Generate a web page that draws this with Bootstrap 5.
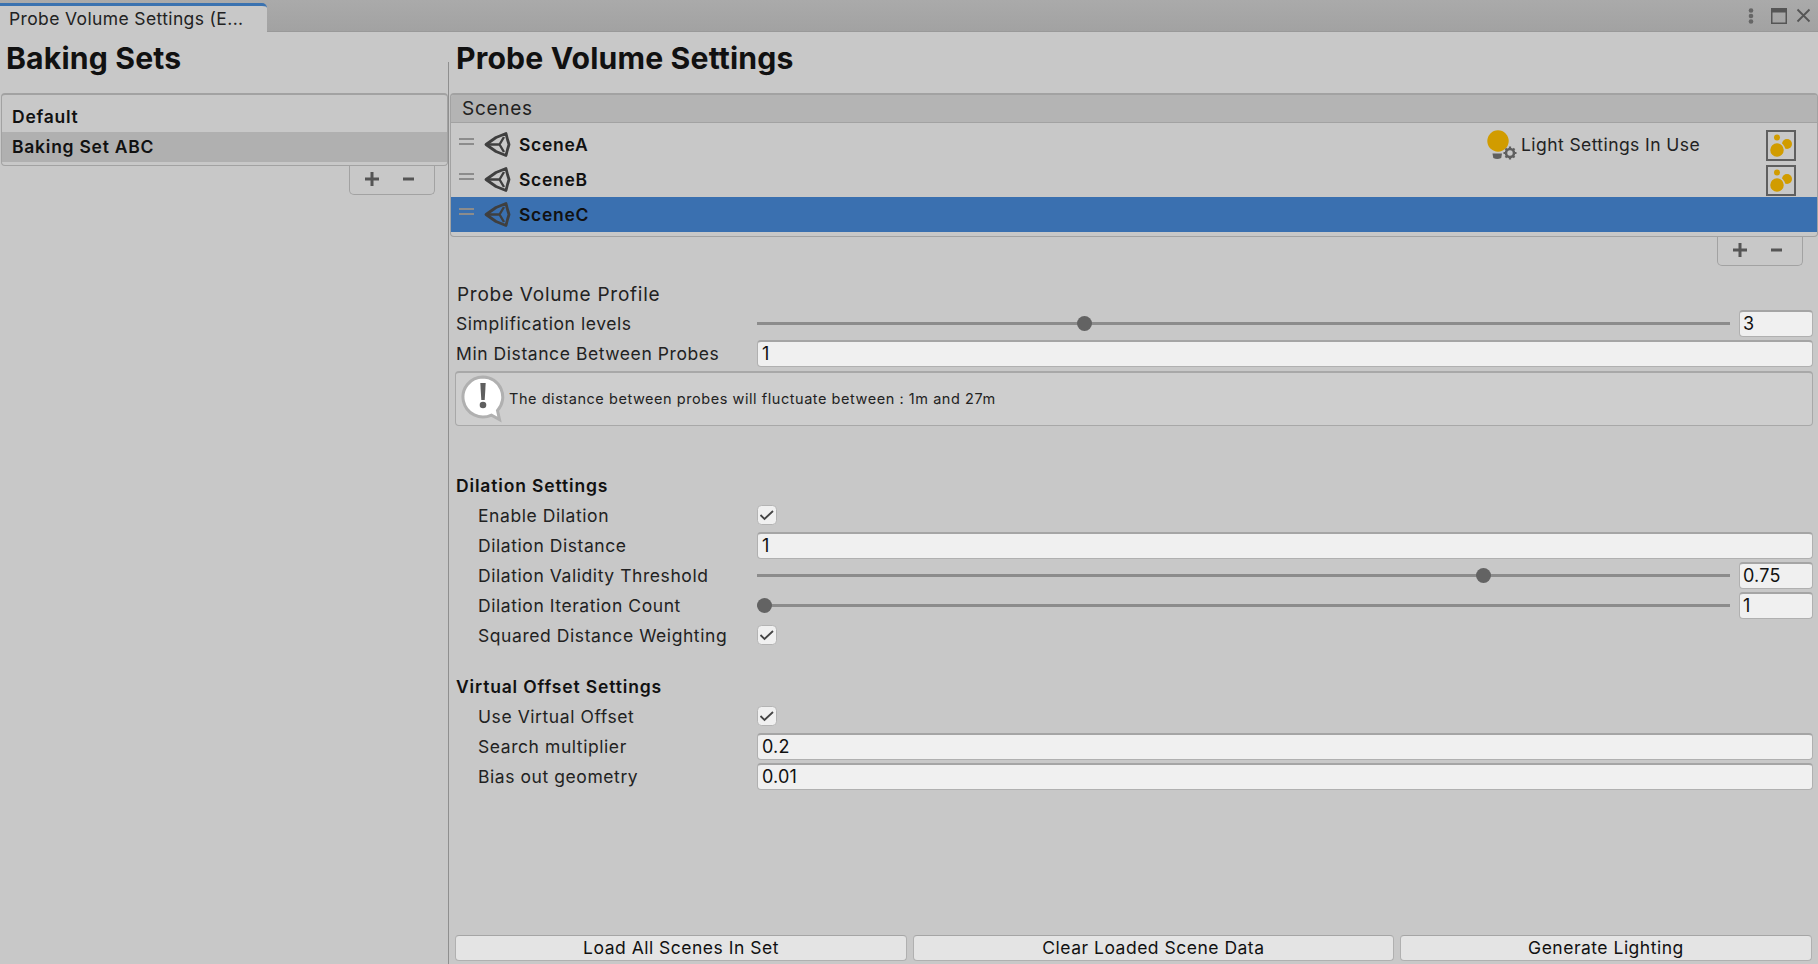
<!DOCTYPE html>
<html lang="en">
<head>
    <meta charset="UTF-8">
    <meta name="viewport" content="width=device-width, initial-scale=1.0">
    <title>Probe Volume Settings</title>
    <link href="https://cdn.jsdelivr.net/npm/bootstrap@5.3.2/dist/css/bootstrap.min.css" rel="stylesheet">
    <style>
        body {
            background: #c8c8c8;
            color: #111;
            font-family: Inter, "Liberation Sans", sans-serif;
            font-size: 17.5px;
            letter-spacing: .5px;
            height: 964px;
            overflow: hidden;
        }
        .tab-strip {
            height: 32px;
            background: linear-gradient(#aaa, #a2a2a2);
            border-bottom: 1px solid #999;
            flex: none;
        }
        .tab-active {
            width: 267px;
            margin-top: 3px;
            height: 29px;
            background: #c8c8c8;
            border-top: 3px solid #3a72b0;
            border-top-right-radius: 5px;
            padding-left: 9px;
            line-height: 26px;
            letter-spacing: .37px;
            color: #222;
        }
        .win-btns { padding-right: 7px; gap: 9px; }
        .main-area { position: relative; }
        .left-pane { width: 448px; flex: none; }
        .right-pane { min-width: 0; padding-bottom: 3px; }
        .pane-split {
            position: absolute;
            left: 448px;
            top: 30px;
            bottom: 0;
            width: 1px;
            background: #8f8f8f;
        }
        .pane-title {
            height: 61px;
            margin: 0;
            font-family: Inter, sans-serif;
            font-size: 30.2px;
            font-weight: 700;
            line-height: 53px;
            letter-spacing: .15px;
        }
        .left-pane .pane-title { padding-left: 6px; }
        .right-pane .pane-title { padding-left: 8px; }
        .list-box {
            border: 1px solid #a2a2a2;
            border-top: 2px solid #a2a2a2;
            border-radius: 4px;
            overflow: hidden;
            background: #c8c8c8;
        }
        .sets-box { margin-left: 1px; height: 73px; padding-top: 7px; }
        .set-row {
            height: 30px;
            line-height: 30px;
            padding: 0 10px;
            font-weight: 600;
            background: transparent;
            border: 0;
            color: #111;
            border-radius: 0 !important;
            font-size: 17.5px;
            letter-spacing: .75px;
        }
        .set-row.picked { background: #b0b0b0; }
        .add-rem {
            width: 86px;
            height: 29px;
            border: 1px solid #a2a2a2;
            border-top: 0;
            border-radius: 0 0 5px 5px;
            gap: 22px;
            padding-left: 14px;
            padding-bottom: 2px;
        }
        .add-rem svg { display: block; }
        .sets-foot { margin-left: 349px; }
        .scenes-foot { margin-left: 1269px; }
        .scenes-box { margin-left: 2px; height: 144px; }
        .scenes-head {
            height: 28px;
            background: #b4b4b4;
            border-bottom: 1px solid #a2a2a2;
            padding-left: 11px;
            line-height: 28px;
            font-size: 19px;
            letter-spacing: .74px;
            color: #222;
            margin-bottom: 4px;
        }
        .scene-row {
            height: 35px;
            padding-left: 8px;
            font-weight: 600;
            letter-spacing: .7px;
        }
        .scene-row.picked { background: #3a70b0; }
        .drag-grip {
            width: 15px;
            height: 3px;
            border-top: 2px solid #8c8c8c;
            border-bottom: 2px solid #8c8c8c;
            margin-right: 10px;
            margin-top: -6px;
            box-sizing: content-box;
        }
        .scene-name { margin-left: 8px; margin-top: 2px; }
        .light-note {
            margin-left: auto;
            font-weight: 400;
            letter-spacing: .42px;
            color: #222;
            width: 275px;
        }
        .light-note span { margin-left: 3px; flex: 1; margin-top: 2px; }
        .light-slot { width: 30px; margin: 1px 21px 0 5px; flex: none; }
        .form-wrap { padding: 0 5px 0 8px; margin-top: 12px; }
        .prop-row { height: 30px; }
        .prop-label { width: 301px; flex: none; color: #222; white-space: nowrap; margin-top: 2px; letter-spacing: .57px; }
        .prop-row.sub .prop-label { padding-left: 22px; }
        .group-head { height: 30px; line-height: 32px; font-weight: 600; color: #111; letter-spacing: .85px; }
        .profile-head { height: 30px; line-height: 34px; color: #222; padding-left: 1px; font-size: 19px; letter-spacing: .74px; }
        .num-field {
            height: 27px;
            padding: 0 4px;
            background: #f0f0f0;
            border: 1px solid #b0b0b0;
            border-top: 2px solid #a5a5a5;
            border-radius: 4px;
            font-size: 18px;
            line-height: 24px;
            color: #111;
            letter-spacing: .2px;
            box-shadow: none;
        }
        .num-field.short { width: 74px; flex: none; padding-left: 3px; }
        .slide-wrap { height: 27px; margin-right: 9px; position: relative; }
        .slide-line { position: absolute; left: 0; right: 0; top: 12px; height: 3px; background: #8c8c8c; }
        .slide-inner { position: absolute; left: 7px; right: 7px; top: 0; bottom: 0; }
        .slide-knob {
            position: absolute;
            top: 6px;
            width: 15px;
            height: 15px;
            margin-left: -7px;
            background: #636363;
            border-radius: 50%;
        }
        .tick-box {
            width: 20px;
            height: 20px;
            margin: 0;
            background-color: #f0f0f0;
            border: 1px solid #b4b4b4;
            border-radius: 3px;
            box-shadow: none;
        }
        .tick-box:checked {
            background-color: #f0f0f0;
            border-color: #b4b4b4;
            background-image: url("data:image/svg+xml,%3csvg xmlns='http://www.w3.org/2000/svg' viewBox='0 0 20 20'%3e%3cpath fill='none' stroke='%23444' stroke-width='1.8' d='M3.5 10l4 4 8.500-8'/%3e%3c/svg%3e");
            background-size: 20px 20px;
        }
        .help-box {
            height: 55px;
            margin-top: 3px;
            background: #cecece;
            border: 1px solid #a8a8a8;
            border-top: 2px solid #a8a8a8;
            border-radius: 4px;
            padding-left: 4px;
            font-size: 14.5px;
            letter-spacing: .55px;
            color: #222;
            margin-bottom: 44px;
            margin-left: -1px;
        }
        .help-box svg { margin-right: 3px; }
        .gap-head { margin-top: 21px; }
        .foot-btns { padding: 0 6px 0 7px; gap: 6px; margin-top: auto; }
        .foot-btn {
            height: 26px;
            padding: 0;
            background: #e4e4e4;
            border: 1px solid #b0b0b0;
            border-top-color: #a5a5a5;
            border-radius: 4px;
            font-size: 17.5px;
            line-height: 22px;
            color: #111;
            letter-spacing: .5px;
        }
        .btn-load { flex: 452 1 0; }
        .btn-clear { flex: 481 1 0; }
        .btn-gen { flex: 412 1 0; }
    </style>
</head>
<body class="d-flex flex-column">
    <div class="tab-strip d-flex justify-content-between align-items-start">
        <div class="tab-active text-nowrap">Probe Volume Settings (E...</div>
        <div class="win-btns d-flex align-items-center" style="height:31px">
            <svg width="6" height="16" viewBox="0 0 6 16"><circle cx="3" cy="2.5" r="2.3" fill="#666"/><circle cx="3" cy="8" r="2.3" fill="#666"/><circle cx="3" cy="13.5" r="2.3" fill="#666"/></svg>
            <svg class="ms-2" width="16" height="16" viewBox="0 0 16 16"><rect x=".75" y=".75" width="14.5" height="14.5" fill="none" stroke="#555" stroke-width="1.5"/><rect x="0" y="0" width="16" height="4.5" fill="#555"/></svg>
            <svg width="15" height="15" viewBox="0 0 15 15"><path d="M1.5 1.5l12 12M13.5 1.5l-12 12" stroke="#555" stroke-width="1.8" fill="none"/></svg>
        </div>
    </div>

    <div class="main-area d-flex flex-grow-1">
        <div class="pane-split"></div>

        <!-- conjuntos de baking -->
        <div class="left-pane">
            <h1 class="pane-title">Baking Sets</h1>
            <div class="list-box sets-box">
                <ul class="list-group">
                    <li class="list-group-item set-row">Default</li>
                    <li class="list-group-item set-row picked">Baking Set ABC</li>
                </ul>
            </div>
            <div class="add-rem sets-foot d-flex align-items-center">
                <svg width="16" height="16" viewBox="0 0 16 16"><path d="M8 1v14M1 8h14" stroke="#555" stroke-width="3"/></svg>
                <svg width="13" height="16" viewBox="0 0 13 16"><path d="M1 8h11" stroke="#555" stroke-width="3"/></svg>
            </div>
        </div>

        <div class="right-pane flex-grow-1 d-flex flex-column">
            <h1 class="pane-title">Probe Volume Settings</h1>

            <div class="list-box scenes-box">
                <div class="scenes-head">Scenes</div>
                <div class="scene-row d-flex align-items-center">
                    <div class="drag-grip"></div>
                    <svg width="27" height="27" viewBox="0 0 27 27"><use href="#unity-mark"/></svg>
                    <span class="scene-name">SceneA</span>
                    <div class="light-note d-flex align-items-center">
                        <svg width="32" height="32" viewBox="0 0 32 32">
                            <circle cx="12" cy="12" r="10.7" fill="#d19c00"/>
                            <path d="M6.500 24.500h9.500l-.8 4.500a8 8 0 0 1-7.900 0z" fill="#5f5f5f"/>
                            <circle cx="24" cy="24" r="4" fill="none" stroke="#5f5f5f" stroke-width="2.600"/>
                            <path d="M24 17.500v3M24 27.500v3M17.500 24h3M27.500 24h3M19.500 19.500l2 2M26.500 26.500l2 2M28.500 19.500l-2 2M21.500 26.500l-2 2" stroke="#5f5f5f" stroke-width="2.200"/>
                        </svg>
                        <span>Light Settings In Use</span>
                    </div>
                    <svg class="light-slot" width="30" height="31" viewBox="0 0 30 31"><use href="#light-box"/></svg>
                </div>
                <div class="scene-row d-flex align-items-center">
                    <div class="drag-grip"></div>
                    <svg width="27" height="27" viewBox="0 0 27 27"><use href="#unity-mark"/></svg>
                    <span class="scene-name">SceneB</span>
                    <svg class="light-slot ms-auto" width="30" height="31" viewBox="0 0 30 31"><use href="#light-box"/></svg>
                </div>
                <div class="scene-row picked d-flex align-items-center">
                    <div class="drag-grip"></div>
                    <svg width="27" height="27" viewBox="0 0 27 27"><use href="#unity-mark"/></svg>
                    <span class="scene-name">SceneC</span>
                </div>
            </div>
            <div class="add-rem scenes-foot d-flex align-items-center">
                <svg width="16" height="16" viewBox="0 0 16 16"><path d="M8 1v14M1 8h14" stroke="#555" stroke-width="3"/></svg>
                <svg width="13" height="16" viewBox="0 0 13 16"><path d="M1 8h11" stroke="#555" stroke-width="3"/></svg>
            </div>

            <div class="form-wrap">
                <div class="profile-head">Probe Volume Profile</div>
                <div class="prop-row d-flex align-items-center">
                    <div class="prop-label">Simplification levels</div>
                    <div class="slide-wrap flex-grow-1"><div class="slide-line"></div><div class="slide-inner"><div class="slide-knob" style="left:33.4%"></div></div></div>
                    <input class="form-control num-field short" value="3">
                </div>
                <div class="prop-row d-flex align-items-center">
                    <div class="prop-label">Min Distance Between Probes</div>
                    <input class="form-control num-field" value="1">
                </div>
                <div class="help-box d-flex align-items-center">
                    <svg width="46" height="50" viewBox="0 0 46 50">
                        <path d="M23 3a20 20 0 1 0 8.500 38.100l8 4.400-2-9A20 20 0 0 0 23 3z" fill="#fff" stroke="#b0b0b0" stroke-width="3"/>
                        <path d="M20.300 9h5.400l-1 17h-3.400z" fill="#5f5f5f"/>
                        <circle cx="23" cy="31" r="3.300" fill="#5f5f5f"/>
                    </svg>
                    <span>The distance between probes will fluctuate between : 1m and 27m</span>
                </div>

                <div class="group-head">Dilation Settings</div>
                <div class="prop-row sub d-flex align-items-center">
                    <div class="prop-label">Enable Dilation</div>
                    <input class="form-check-input tick-box" type="checkbox" checked>
                </div>
                <div class="prop-row sub d-flex align-items-center">
                    <div class="prop-label">Dilation Distance</div>
                    <input class="form-control num-field" value="1">
                </div>
                <div class="prop-row sub d-flex align-items-center">
                    <div class="prop-label">Dilation Validity Threshold</div>
                    <div class="slide-wrap flex-grow-1"><div class="slide-line"></div><div class="slide-inner"><div class="slide-knob" style="left:75%"></div></div></div>
                    <input class="form-control num-field short" value="0.75">
                </div>
                <div class="prop-row sub d-flex align-items-center">
                    <div class="prop-label">Dilation Iteration Count</div>
                    <div class="slide-wrap flex-grow-1"><div class="slide-line"></div><div class="slide-inner"><div class="slide-knob" style="left:0%"></div></div></div>
                    <input class="form-control num-field short" value="1">
                </div>
                <div class="prop-row sub d-flex align-items-center">
                    <div class="prop-label">Squared Distance Weighting</div>
                    <input class="form-check-input tick-box" type="checkbox" checked>
                </div>

                <div class="group-head gap-head">Virtual Offset Settings</div>
                <div class="prop-row sub d-flex align-items-center">
                    <div class="prop-label">Use Virtual Offset</div>
                    <input class="form-check-input tick-box" type="checkbox" checked>
                </div>
                <div class="prop-row sub d-flex align-items-center">
                    <div class="prop-label">Search multiplier</div>
                    <input class="form-control num-field" value="0.2">
                </div>
                <div class="prop-row sub d-flex align-items-center">
                    <div class="prop-label">Bias out geometry</div>
                    <input class="form-control num-field" value="0.01">
                </div>
            </div>

            <div class="foot-btns d-flex">
                <button type="button" class="btn foot-btn btn-load">Load All Scenes In Set</button>
                <button type="button" class="btn foot-btn btn-clear">Clear Loaded Scene Data</button>
                <button type="button" class="btn foot-btn btn-gen">Generate Lighting</button>
            </div>
        </div>
    </div>

    <svg width="0" height="0" class="d-block" aria-hidden="true">
        <defs>
            <g id="unity-mark" fill="none" stroke="#3f3f3f" stroke-width="2.800" stroke-linejoin="round">
                <path d="M2 13.500L12 6.500 22 2.500 23.500 8.500 25 13.500 23.500 18.500 22 24.500 12 20.500z"/>
                <path d="M4 13.500H15.500L20 6M15.500 13.500L20 21" stroke-width="2.400"/>
            </g>
            <g id="light-box">
                <rect x="1" y="1" width="28" height="29" fill="none" stroke="#5f5f5f" stroke-width="2"/>
                <circle cx="21" cy="14" r="5" fill="#d19c00"/>
                <circle cx="11" cy="7.500" r="3" fill="#d19c00"/>
                <circle cx="11" cy="20" r="7.500" fill="#d19c00" stroke="#c8c8c8" stroke-width="1.500"/>
            </g>
        </defs>
    </svg>

    <script src="https://cdn.jsdelivr.net/npm/bootstrap@5.3.2/dist/js/bootstrap.bundle.min.js"></script>
</body>
</html>
